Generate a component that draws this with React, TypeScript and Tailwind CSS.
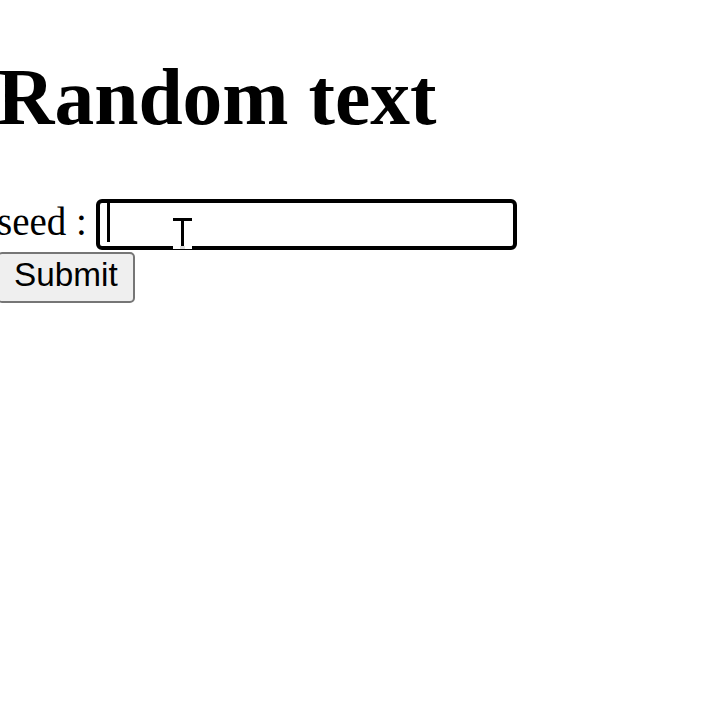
import React from "react";

export default function App() {
  return (
    <div className="relative w-[720px] h-[714px] overflow-hidden bg-white text-black font-['Liberation_Serif',serif]">
      <div className="ml-[-3px]">
        <h1 className="mt-[53px] text-[79.5px] font-bold leading-[88px] whitespace-nowrap">Random text</h1>
        <div className="mt-[56px] flex h-[55px] items-start">
          <span className="mt-[2px] text-[39px] leading-[46px] whitespace-nowrap">seed :</span>
          <div className="ml-[9px] mt-[2px] flex h-[51px] w-[421px] items-start rounded-[6px] border-[4px] border-black bg-white">
            <div className="ml-[7px] h-[39px] w-[3px] bg-black" />
          </div>
        </div>
        <button className="block rounded-[5px] border-2 border-[#767676] bg-[#efefef] px-[15px] pt-[2px] pb-[7px] font-['Liberation_Sans',Arial,sans-serif] text-[33.3px] leading-[38px] text-black">
          Submit
        </button>
      </div>
      <svg className="absolute left-[172px] top-[217px]" width="22" height="34" viewBox="0 0 22 34">
        <rect x="1" y="1" width="19" height="3" fill="#000" />
        <rect x="9" y="1" width="3" height="29" fill="#000" />
        <rect x="1" y="29" width="19" height="3" fill="#fff" />
        <rect x="8" y="29" width="5" height="3" fill="#ddd" />
      </svg>
    </div>
  );
}
